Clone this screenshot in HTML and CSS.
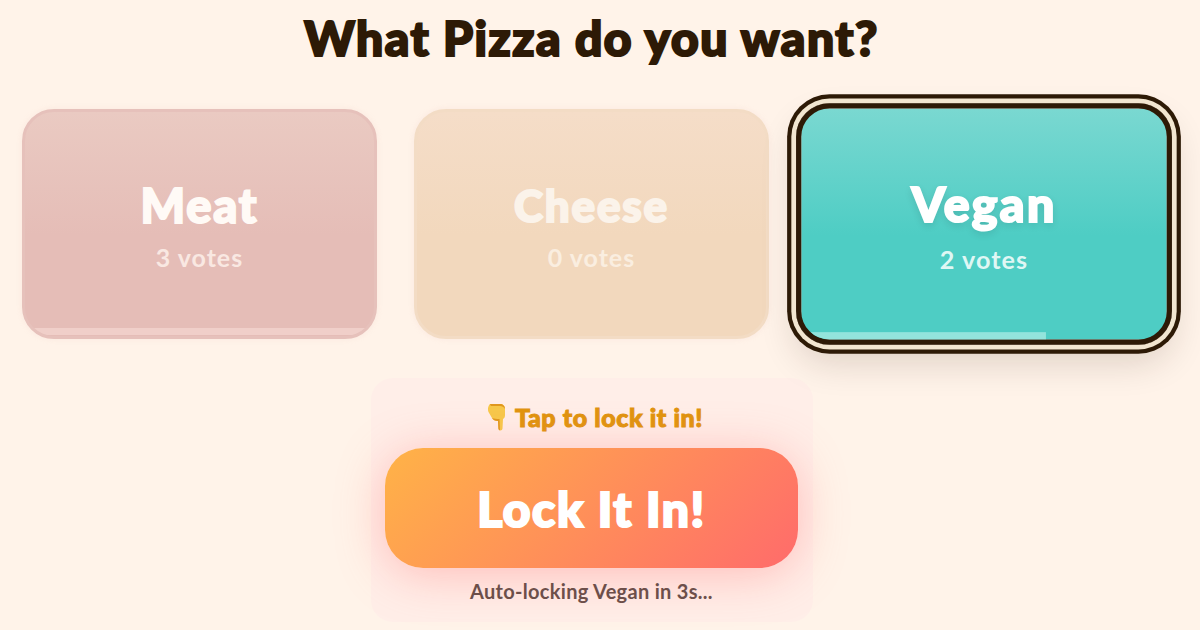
FILE: index.html
```html
<!DOCTYPE html>
<html lang="en">
<head>
<meta charset="utf-8">
<title>What Pizza do you want?</title>
<link rel="stylesheet" href="styles.css">
</head>
<body>
<main class="page">
  <h1 class="title">What Pizza do you want?</h1>
  <section class="options">
    <button class="card card-meat">
      <span class="name">Meat</span>
      <span class="votes">3 votes</span>
      <span class="bar bar-meat"></span>
    </button>
    <button class="card card-cheese">
      <span class="name">Cheese</span>
      <span class="votes">0 votes</span>
    </button>
    <button class="card card-vegan">
      <span class="name">Vegan</span>
      <span class="votes">2 votes</span>
      <span class="bar bar-vegan"></span>
    </button>
  </section>
  <section class="panel">
    <p class="hint"><svg class="hand" viewBox="0 0 20 28" aria-hidden="true"><path fill="#f7c84a" d="M3 1h10c3 0 5 2 5 5v6c0 2-.5 3-2 4l-.5 9.500c-.1 2.600-4 2.600-4.100 0L11 18c-3 0-5-1-6-3L1.500 9C.5 7 .8 3 3 1z"/><path fill="#e0981f" d="M5 15c1 2 3 3 6 3l.4 7.500c.1 1.300 1 1.800 1.600 1.800L12.500 16c-3 0-5.500-.2-7.500-1zM3 1h10c3 0 5 2 5 5-1-2-3-3-5-3H6C4.500 3 3.500 3.500 3 1z"/></svg><span>Tap to lock it in!</span></p>
    <button class="lock">Lock It In!</button>
    <p class="auto">Auto-locking Vegan in 3s...</p>
  </section>
</main>
</body>
</html>
```
FILE: styles.css
```css
* { box-sizing: border-box; }
html, body { margin: 0; height: 630px; overflow: hidden; background: #fff3e9; }
.page {
  width: 1183px;
  padding: 0 22px;
  display: flex;
  flex-direction: column;
  align-items: center;
}
.title {
  margin: 11px 0 0;
  height: 54px;
  font-family: "Lato", sans-serif;
  font-weight: 900;
  font-size: 48px;
  line-height: 54px;
  letter-spacing: 1.5px;
  color: #2d1a06;
  -webkit-text-stroke: 2.2px #2d1a06;
}
.options {
  margin-top: 44px;
  width: 100%;
  display: grid;
  grid-template-columns: repeat(3, 355px);
  column-gap: 37px;
}
.card {
  position: relative;
  height: 230px;
  border: 0;
  padding: 2px 0 0;
  border-radius: 32px;
  overflow: hidden;
  display: flex;
  flex-direction: column;
  align-items: center;
  justify-content: center;
  color: #fff;
  box-shadow: 0 0 6px rgba(229, 189, 183, .2);
}
.card-meat { background: linear-gradient(180deg, #eacac2 0%, #e5bdb7 55%); border: 3px solid #e6c1bb; }
.card-cheese { background: linear-gradient(180deg, #f5ddc8 0%, #f2d8bd 55%); border: 3px solid #f3dcc5; }
.card-vegan {
  background: linear-gradient(180deg, #7ad8d1 0%, #4ecdc4 55%);
  border: 5px solid #2d1a06;
  margin: 0 -1.5px;
  padding-top: 3px;
  transform: scale(1.05);
  border-radius: 32px;
  box-shadow: 0 0 0 4.500px #f2e6d0, 0 0 0 8.500px #2d1a06, 0 16px 34px rgba(45, 26, 6, .16);
}
.name {
  font-family: "Lato", sans-serif;
  font-weight: 900;
  font-size: 45px;
  line-height: 52px;
  letter-spacing: 1.8px;
  -webkit-text-stroke: 2px currentColor;
}
.card-meat .name { color: #fffaf6; font-size: 47px; }
.card-cheese .name { color: #fbf3ea; font-size: 44px; }
.card-vegan .name { font-size: 46px; letter-spacing: 2.2px; text-shadow: 0 3px 8px rgba(0, 0, 0, .14); }
.votes {
  margin-top: 11px;
  font-family: "Lato", sans-serif;
  font-weight: 700;
  font-size: 25px;
  line-height: 30px;
  letter-spacing: 1px;
}
.card-meat .votes { color: #f9e8e2; }
.card-cheese .votes { color: #faeee0; }
.card-vegan .votes { color: #dff7f4; font-size: 24px; margin-top: 12px; }
.bar { position: absolute; left: 0; bottom: 0; height: 7px; }
.bar-meat { bottom: 1px; width: 100%; background: #f0cfc9; }
.bar-vegan { width: 67%; background: #93e4dc; }
.panel {
  margin-top: 39px;
  width: 442px;
  height: 244px;
  border-radius: 22px;
  padding: 0 14px;
  background: #ffeee8;
  display: flex;
  flex-direction: column;
  align-items: center;
}
.hint {
  margin: 21px 0 0 7px;
  height: 36px;
  display: flex;
  align-items: center;
  gap: 8px;
  font-family: "Lato", sans-serif;
  font-weight: 900;
  font-size: 25px;
  line-height: 36px;
  letter-spacing: .6px;
  color: #e0940f;
  -webkit-text-stroke: 1px #e0940f;
}
.hand { width: 20px; height: 28px; flex: none; }
.lock {
  margin-top: 13px;
  width: 413px;
  height: 120px;
  flex: none;
  border: 0;
  border-radius: 38px;
  background: linear-gradient(135deg, #ffb347, #ff6b6b);
  box-shadow: 0 6px 48px rgba(255, 107, 107, .38);
  color: #fff;
  font-family: "Lato", sans-serif;
  font-weight: 900;
  font-size: 48px;
  letter-spacing: 1.6px;
  -webkit-text-stroke: 2.2px #fff;
}
.auto {
  margin: 12px 0 0;
  font-family: "Lato", sans-serif;
  font-weight: 700;
  font-size: 20px;
  line-height: 22px;
  letter-spacing: .3px;
  color: #6d4f4a;
}
```
